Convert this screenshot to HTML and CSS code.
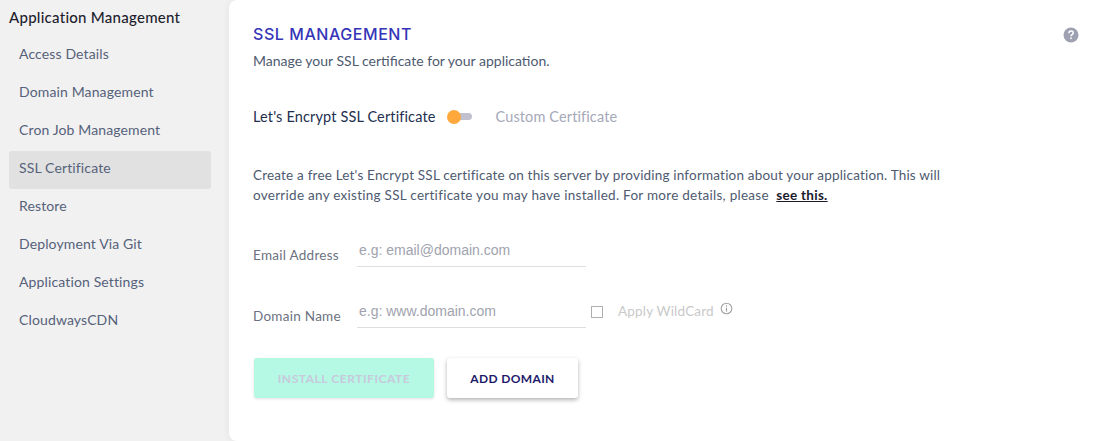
FILE: index.html
```html
<!DOCTYPE html>
<html lang="en">
<head>
<meta charset="utf-8">
<title>SSL Management</title>
<link rel="stylesheet" href="styles.css">
</head>
<body>
<div class="app">
  <aside class="sidebar">
    <h2 class="side-title">Application Management</h2>
    <nav class="side-nav">
      <a class="side-link">Access Details</a>
      <a class="side-link">Domain Management</a>
      <a class="side-link">Cron Job Management</a>
      <a class="side-link active">SSL Certificate</a>
      <a class="side-link">Restore</a>
      <a class="side-link">Deployment Via Git</a>
      <a class="side-link">Application Settings</a>
      <a class="side-link">CloudwaysCDN</a>
    </nav>
  </aside>
  <main class="panel">
    <div class="head">
      <h1 class="title">SSL MANAGEMENT</h1>
      <svg class="help" width="16" height="16" viewBox="0 0 16 16"><circle cx="8" cy="8" r="7.5" fill="#9ea1b1"/><path d="M5.9 6.2c0-1.3 1-2.1 2.2-2.1s2.1.8 2.1 1.9c0 1.7-2.2 1.7-2.2 3.3" fill="none" stroke="#fff" stroke-width="1.5"/><rect x="7.2" y="10.5" width="1.6" height="1.6" fill="#fff"/></svg>
    </div>
    <p class="sub">Manage your SSL certificate for your application.</p>
    <div class="toggle-row">
      <span class="toggle-on">Let's Encrypt SSL Certificate</span>
      <span class="switch"><span class="knob"></span></span>
      <span class="toggle-off">Custom Certificate</span>
    </div>
    <p class="desc">Create a free Let's Encrypt SSL certificate on this server by providing information about your application. This will override any existing SSL certificate you may have installed. For more details, please &nbsp;<a class="more">see this.</a></p>
    <div class="field first">
      <label class="label">Email Address</label>
      <input class="input" placeholder="e.g: email@domain.com">
    </div>
    <div class="field">
      <label class="label">Domain Name</label>
      <input class="input" placeholder="e.g: www.domain.com">
      <span class="check"></span>
      <span class="wild">Apply WildCard</span>
      <svg class="info" width="13" height="13" viewBox="0 0 13 13"><circle cx="6.5" cy="6.5" r="5.3" fill="none" stroke="#a3a3a3" stroke-width="1.1"/><rect x="5.9" y="5.6" width="1.2" height="4" fill="#a3a3a3"/><rect x="5.9" y="3.3" width="1.2" height="1.3" fill="#a3a3a3"/></svg>
    </div>
    <div class="actions">
      <button class="btn primary">INSTALL CERTIFICATE</button>
      <button class="btn secondary">ADD DOMAIN</button>
    </div>
  </main>
</div>
</body>
</html>
```
FILE: styles.css
```css
* { box-sizing: border-box; }
html, body { margin: 0; height: 100%; overflow: hidden; }
body { background: #f1f1f1; font-family: "Lato", "Liberation Sans", sans-serif; font-size: 14px; color: #4e5a70; }
.app { display: flex; height: 441px; }
.sidebar { width: 229px; flex: none; padding: 8px 18px 0 9px; }
.side-title { margin: 0 0 11px; font-size: 15px; line-height: 18px; font-weight: 500; color: #1e1e2e; letter-spacing: .26px; }
.side-nav { display: flex; flex-direction: column; }
.side-link { height: 38px; line-height: 34px; padding-left: 10px; border-radius: 3px; font-size: 14px; letter-spacing: .13px; color: #56617a; }
.side-link.active { background: #e1e1e1; }
.panel { flex: 1; background: #fff; border-radius: 8px 0 0 8px; box-shadow: 0 0 8px rgba(0,0,0,.06); padding: 24px 24px 0; }
.head { display: flex; justify-content: space-between; align-items: flex-start; padding-right: 4px; }
.title { margin: 0; font-family: "Inter", "Lato", sans-serif; font-size: 16px; line-height: 20px; font-weight: 500; color: #3435b8; letter-spacing: .56px; }
.help { margin-top: 3px; }
.sub { margin: 8px 0 0; font-size: 14px; line-height: 18px; color: #4e5a70; }
.toggle-row { display: flex; align-items: center; margin-top: 36px; height: 20px; }
.toggle-on { font-size: 14.5px; letter-spacing: .14px; color: #232f50; }
.switch { position: relative; width: 23px; height: 7px; margin-left: 13px; border-radius: 4px; background: #bfc1cf; }
.knob { position: absolute; left: -2px; top: -3px; width: 14px; height: 14px; border-radius: 50%; background: #ffa83c; }
.toggle-off { margin-left: 24px; font-size: 14.5px; letter-spacing: .12px; color: #a5a8b8; }
.desc { width: 700px; margin: 39px 0 0; font-size: 13.5px; line-height: 20px; letter-spacing: .27px; color: #4e5a70; }
.desc::first-line { letter-spacing: .19px; }
.more { color: #1a1a2a; font-weight: 700; text-decoration: underline; }
.field { display: flex; align-items: flex-start; margin-top: 23px; height: 38px; }
.field.first { margin-top: 24px; }
.label { width: 104px; padding-top: 17px; font-size: 13.5px; line-height: 18px; letter-spacing: .27px; color: #6c7280; }
.input { width: 229px; height: 38px; border: 0; border-bottom: 1px solid #dedede; padding: 4px 0 0 2px; outline: 0; font: 14px "Liberation Sans", Arial, sans-serif; background: transparent; }
.input::placeholder { color: #a0a3ae; opacity: 1; }
.check { width: 12px; height: 12px; margin: 16px 0 0 5px; border: 1px solid #b0b0b0; }
.wild { margin: 12px 0 0 15px; font-size: 13.5px; line-height: 18px; letter-spacing: .2px; color: #c9c9c9; }
.info { margin: 12px 0 0 6px; }
.actions { display: flex; gap: 13px; margin: 30px 0 0 1px; }
.btn { height: 40px; border: 0; border-radius: 3px; font-family: "Lato", "Liberation Sans", sans-serif; font-size: 12px; font-weight: 700; letter-spacing: .4px; }
.primary { width: 180px; background: #b5f8e4; color: #c8c9dc; letter-spacing: .55px; box-shadow: 0 1px 3px rgba(0,0,0,.12); }
.secondary { width: 131px; background: #fff; color: #1e1a6a; letter-spacing: .35px; box-shadow: 0 2px 4px rgba(0,0,0,.3); }
```
